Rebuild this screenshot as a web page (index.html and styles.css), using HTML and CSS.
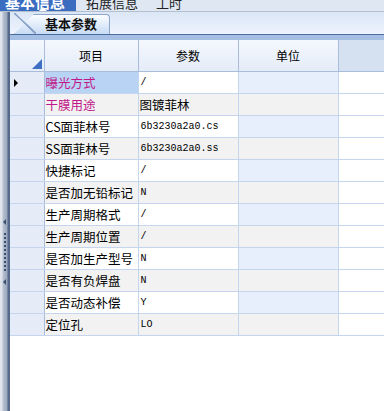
FILE: index.html
```html
<!DOCTYPE html>
<html lang="zh-CN">
<head>
  <meta charset="UTF-8" />
  <title>基本参数</title>
  <link rel="stylesheet" href="styles.css">
</head>
<body>
  <div class="tabbar">
    <div class="tab active">基本信息<span class="caret"></span></div>
    <div class="tab">拓展信息</div>
    <div class="tab">工时</div>
  </div>
  <div class="frame">
    <div class="splitter">
      <span class="arrow top"></span>
      <span class="dots"></span>
      <span class="arrow bottom"></span>
    </div>
    <div class="content">
      <div class="subtabs">
        <div class="subtab"><span class="subtab-label">基本参数</span></div>
      </div>
      <div class="band"></div>
      <table class="grid">
        <colgroup>
          <col class="c-head">
          <col class="c-item">
          <col class="c-param">
          <col class="c-unit">
          <col>
        </colgroup>
        <thead>
          <tr>
            <th class="corner"><span class="corner-mark"></span></th>
            <th>项目</th>
            <th>参数</th>
            <th>单位</th>
            <th class="empty"></th>
          </tr>
        </thead>
        <tbody>
          <tr class="current">
            <td class="rowhead"><span class="pointer"></span></td>
            <td class="item hl selected">曝光方式</td>
            <td class="val">/</td><td class="unit"></td><td class="fill"></td>
          </tr>
          <tr><td class="rowhead"></td><td class="item hl">干膜用途</td><td class="val cjk">图镀菲林</td><td class="unit"></td><td class="fill"></td></tr>
          <tr><td class="rowhead"></td><td class="item">CS面菲林号</td><td class="val">6b3230a2a0.cs</td><td class="unit"></td><td class="fill"></td></tr>
          <tr><td class="rowhead"></td><td class="item">SS面菲林号</td><td class="val">6b3230a2a0.ss</td><td class="unit"></td><td class="fill"></td></tr>
          <tr><td class="rowhead"></td><td class="item">快捷标记</td><td class="val">/</td><td class="unit"></td><td class="fill"></td></tr>
          <tr><td class="rowhead"></td><td class="item">是否加无铅标记</td><td class="val">N</td><td class="unit"></td><td class="fill"></td></tr>
          <tr><td class="rowhead"></td><td class="item">生产周期格式</td><td class="val">/</td><td class="unit"></td><td class="fill"></td></tr>
          <tr><td class="rowhead"></td><td class="item">生产周期位置</td><td class="val">/</td><td class="unit"></td><td class="fill"></td></tr>
          <tr><td class="rowhead"></td><td class="item">是否加生产型号</td><td class="val">N</td><td class="unit"></td><td class="fill"></td></tr>
          <tr><td class="rowhead"></td><td class="item">是否有负焊盘</td><td class="val">N</td><td class="unit"></td><td class="fill"></td></tr>
          <tr><td class="rowhead"></td><td class="item">是否动态补偿</td><td class="val">Y</td><td class="unit"></td><td class="fill"></td></tr>
          <tr><td class="rowhead"></td><td class="item">定位孔</td><td class="val">LO</td><td class="unit"></td><td class="fill"></td></tr>
        </tbody>
      </table>
    </div>
  </div>
</body>
</html>
```

FILE: styles.css
```css
body {
  margin: 0;
  width: 384px;
  height: 411px;
  overflow: hidden;
  background: #fff;
  font-family: "Noto Sans CJK SC", sans-serif;
  font-size: 12px;
  color: #000;
}

/* top tab strip, mostly scrolled out of view */
.tabbar {
  height: 11px;
  display: flex;
  overflow: hidden;
  background: #dfe7f3;
  border-bottom: 1px solid #b5c0cf;
}

.tab {
  position: relative;
  height: 11px;
  line-height: 6px;
  padding: 0 8px 0 10px;
  font-size: 13px;
  color: #222;
  white-space: nowrap;
}

.tab.active {
  background: #3a6cc0;
  color: #fff;
  font-size: 15px;
  font-weight: bold;
  line-height: 4px;
  width: 66px;
  padding: 0 5px;
  overflow: hidden;
}

.caret {
  position: absolute;
  left: 39px;
  bottom: 0;
  border-left: 4px solid transparent;
  border-right: 4px solid transparent;
  border-bottom: 4px solid #fff;
}

.frame {
  display: flex;
  height: 399px;
}

.splitter {
  position: relative;
  width: 10px;
  flex: none;
  background: linear-gradient(to right, #dfe3ea 0, #dfe3ea 2px, #b8c2d2 3px, #9aa7bb 7px, #56698a 8px, #56698a 10px);
}

.arrow {
  position: absolute;
  left: 3px;
  border-top: 3px solid transparent;
  border-bottom: 3px solid transparent;
  border-right: 3px solid #3d4f70;
}

.arrow.top { top: 207px; }
.arrow.bottom { top: 267px; }

.dots {
  position: absolute;
  left: 4px;
  top: 221px;
  height: 38px;
  border-left: 2px dotted #3d4f70;
}

.content {
  flex: 1;
  display: flex;
  flex-direction: column;
}

.subtabs {
  height: 22px;
  background: linear-gradient(#dbe6f6, #eef4fd);
  display: flex;
  align-items: flex-end;
  padding-left: 4px;
}

.subtab {
  position: relative;
  width: 96px;
  height: 20px;
}

.subtab::before {
  content: "";
  position: absolute;
  inset: 0;
  background: linear-gradient(#fbfdff, #c7dbf5);
  border: 1px solid #8ea6cb;
  border-bottom: none;
  border-radius: 0 4px 0 0;
  clip-path: polygon(0 100%, 20px 0, 100% 0, 100% 100%);
}

.subtab::after {
  content: "";
  position: absolute;
  left: 0;
  bottom: 0;
  width: 22px;
  height: 21px;
  background: linear-gradient(to top right, transparent 47%, #8ea6cb 48%, #8ea6cb 53%, transparent 54%);
}

.subtab-label {
  position: relative;
  z-index: 1;
  display: block;
  padding-left: 31px;
  line-height: 19px;
  font-size: 13px;
  font-weight: bold;
  color: #111;
}

.band {
  height: 5px;
  border-top: 1px solid #4d6d9f;
  background: #a6bfe4;
}

.grid {
  border-collapse: collapse;
  table-layout: fixed;
  width: 100%;
}

.c-head { width: 34px; }
.c-item { width: 94px; }
.c-param { width: 100px; }
.c-unit { width: 100px; }

.grid th {
  height: 31px;
  padding: 0;
  font-weight: normal;
  background: linear-gradient(#f4f7fd, #e4ecf8);
  border: 1px solid #a9bcda;
  border-top: none;
}

.grid th.empty {
  background: #d5e0f1;
  border-right: none;
}

.grid th.corner {
  position: relative;
  border-left: none;
}

.corner-mark {
  position: absolute;
  right: 2px;
  bottom: 2px;
  border-left: 10px solid transparent;
  border-bottom: 10px solid #3f6fc2;
}

.grid td {
  height: 21px;
  padding: 0;
  border: 1px solid #c6d5ee;
  white-space: nowrap;
  overflow: hidden;
}

.grid tbody tr:nth-child(even) td { background: #f2f2f2; }

.grid td.rowhead {
  position: relative;
  background: #e6ecf7;
  border-left: none;
  border-right-color: #a9bcda;
}

.grid tbody tr:nth-child(even) td.rowhead { background: #e6ecf7; }

.pointer {
  position: absolute;
  left: 4px;
  top: 7px;
  border-top: 4px solid transparent;
  border-bottom: 4px solid transparent;
  border-left: 4px solid #000;
}

.item {
  padding-left: 1px !important;
  font-size: 12.5px;
}

.item.hl { color: #c0188a; }

.grid td.item.selected { background: #b9d3f4; }

.val {
  padding-left: 2px !important;
  font-family: "Liberation Mono", "Noto Sans CJK SC", monospace;
  font-size: 10px;
}

.val.cjk {
  font-family: "Noto Sans CJK SC", sans-serif;
  font-size: 12.5px;
  padding-left: 1px !important;
}

.grid td.unit { background: #e6effb; }

.grid td.fill {
  background: #fff;
  border-right: none;
}

.grid tbody tr:nth-child(even) td.fill { background: #fff; }
```
